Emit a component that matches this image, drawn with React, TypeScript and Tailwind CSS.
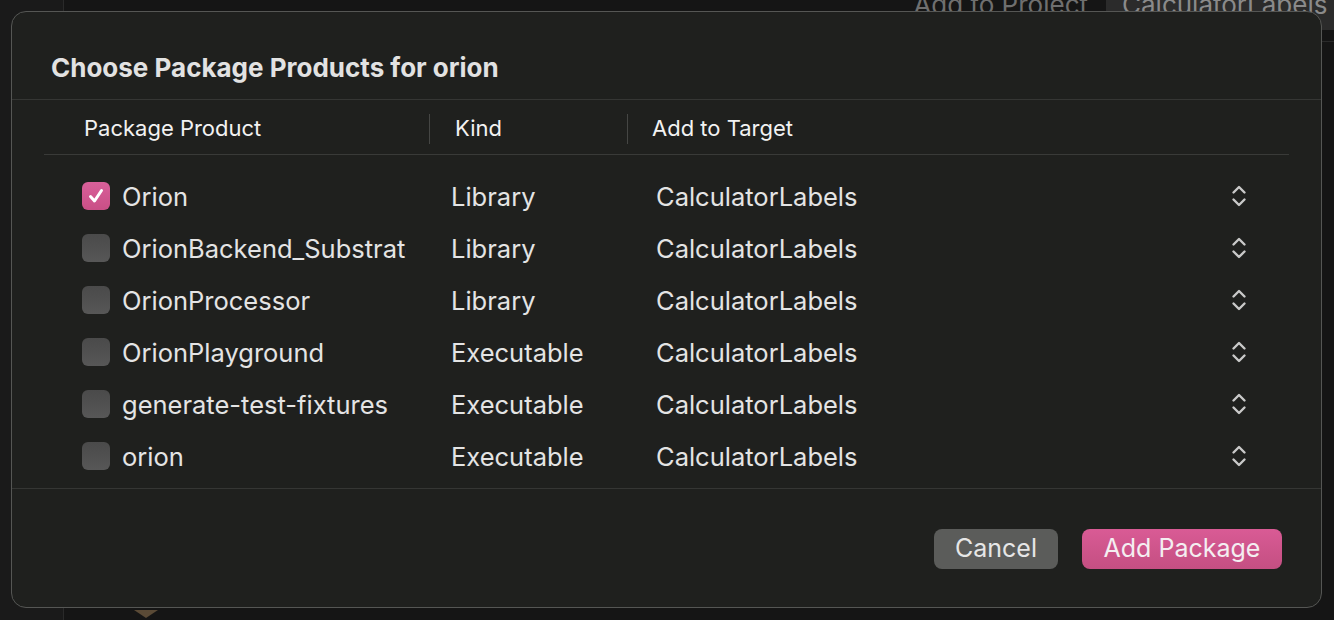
import React from 'react';

const products = [
  { name: 'Orion', kind: 'Library', checked: true },
  { name: 'OrionBackend_Substrate', kind: 'Library', checked: false },
  { name: 'OrionProcessor', kind: 'Library', checked: false },
  { name: 'OrionPlayground', kind: 'Executable', checked: false },
  { name: 'generate-test-fixtures', kind: 'Executable', checked: false },
  { name: 'orion', kind: 'Executable', checked: false },
];

const UpDown: React.FC = () => (
  <svg width="16" height="24" viewBox="0 0 16 24" fill="none" stroke="#c9c9c9" strokeWidth="2.4" strokeLinecap="round" strokeLinejoin="round">
    <path d="M2.5 8.5 L8 3 L13.5 8.5" />
    <path d="M2.5 15.5 L8 21 L13.5 15.5" />
  </svg>
);

const Checkbox: React.FC<{ checked: boolean }> = ({ checked }) =>
  checked ? (
    <div className="w-[28px] h-[28px] rounded-[6px] bg-gradient-to-b from-[#d9609a] to-[#c94f86] flex items-center justify-center">
      <svg width="18" height="18" viewBox="0 0 18 18" fill="none" stroke="#ffffff" strokeWidth="3" strokeLinecap="round" strokeLinejoin="round">
        <path d="M3.5 9.5 L7.5 14 L14.5 3.5" />
      </svg>
    </div>
  ) : (
    <div className="w-[28px] h-[28px] rounded-[6px] bg-gradient-to-b from-[#4a4a4a] to-[#575757]" />
  );

export default function App() {
  return (
    <div className="relative w-[1334px] h-[620px] overflow-hidden bg-[#151515]" style={{ fontFamily: 'Inter, "Noto Sans", sans-serif' }}>
      {/* window behind the sheet */}
      <div className="flex h-full">
        <div className="w-[64px] h-full bg-[#1a1a1a] border-r border-[#2a2a2a]" />
        <div className="flex-1 flex flex-col">
          <div className="h-[42px] flex items-start justify-end border-b border-[#2a2a2a]">
            <span className="text-[26px] leading-none -mt-[8px] text-[#6f6f6f] mr-[18px]">Add to Project</span>
            <div className="w-[228px] h-[30px] bg-[#2b2b2b] overflow-hidden">
              <span className="block text-[26px] leading-none -mt-[8px] ml-[16px] text-[#8a8a8a]">CalculatorLabels</span>
            </div>
          </div>
          <div className="flex-1" />
          <div className="h-[10px] pl-[70px] flex">
            <svg width="24" height="10" viewBox="0 0 24 10">
              <path d="M0 0 L12 8 L24 0 Z" fill="#5a4a36" />
            </svg>
          </div>
        </div>
      </div>

      {/* sheet */}
      <div className="absolute left-[11px] top-[11px] w-[1311px] h-[597px] rounded-[15px] border border-[#555654] bg-[#1f201e] flex flex-col text-[#e4e4e4]">
        <div className="h-[87px] pl-[39px] pt-[40px]">
          <h1 className="text-[26px] leading-[32px] font-bold text-[#e2e2e2]">Choose Package Products for orion</h1>
        </div>
        <div className="h-px bg-[#353634]" />

        <div className="mx-[32px] h-[55px] pt-[3px] flex items-center border-b border-[#393a38] text-[22px] text-[#f2f2f2]">
          <div className="w-[385px] pl-[40px]">Package Product</div>
          <div className="w-px h-[30px] bg-[#454644]" />
          <div className="w-[197px] pl-[25px]">Kind</div>
          <div className="w-px h-[30px] bg-[#454644]" />
          <div className="pl-[24px]">Add to Target</div>
        </div>

        <div className="mx-[32px] pt-[15px] pb-[6px] flex flex-col text-[25.5px]">
          {products.map(p => (
            <div key={p.name} className="h-[52px] flex items-center">
              <div className="w-[407px] pl-[38px] flex items-center gap-[12px]">
                <Checkbox checked={p.checked} />
                <span className="w-[284px] overflow-hidden whitespace-nowrap pt-[3px]">{p.name}</span>
              </div>
              <div className="w-[205px] pt-[3px]">{p.kind}</div>
              <div className="flex-1 flex items-center justify-between pr-[42px]">
                <span className="pt-[3px]">CalculatorLabels</span>
                <UpDown />
              </div>
            </div>
          ))}
        </div>
        <div className="h-px bg-[#353634]" />

        <div className="flex-1 flex items-start justify-end gap-[24px] pt-[40px] pr-[39px]">
          <button className="w-[124px] h-[40px] rounded-[8px] bg-[#5b5c5a] text-[25px] text-[#e6e6e6]">Cancel</button>
          <button className="w-[200px] h-[40px] rounded-[8px] bg-gradient-to-b from-[#d95b95] to-[#c44f82] text-[25px] text-[#f4eef1]">Add Package</button>
        </div>
      </div>
    </div>
  );
}
